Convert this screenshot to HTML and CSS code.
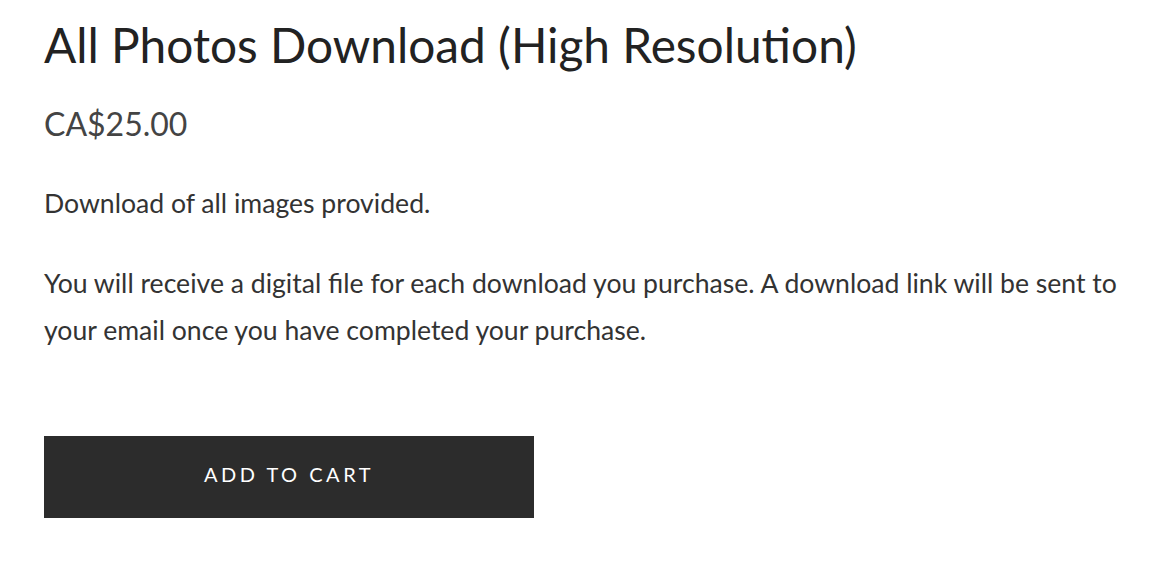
FILE: index.html
```html
<!DOCTYPE html>
<html lang="en">
<head>
    <meta charset="UTF-8">
    <meta name="viewport" content="width=device-width, initial-scale=1.0">
    <title>All Photos Download (High Resolution)</title>
    <link rel="stylesheet" href="styles.css">
</head>
<body>
    <div class="product">
        <h1 class="product-title">All Photos Download (High Resolution)</h1>
        <p class="product-price">CA$25.00</p>
        <div class="product-description">
            <p>Download of all images provided.</p>
            <p>You will receive a digital file for each download you purchase. A download link will be sent to your email once you have completed your purchase.</p>
        </div>
        <button class="add-to-cart" type="button">Add to Cart</button>
    </div>
</body>
</html>
```

FILE: styles.css
```css
body {
    font-family: Lato, "Open Sans", sans-serif;
    background: #fff;
    color: #333;
    margin: 0;
    padding: 0;
}

.product {
    padding: 16px 30px 40px 44px;
}

.product-title {
    font-size: 47.8px;
    font-weight: 400;
    line-height: 1.2;
    color: #222;
    margin: 0 0 32px;
}

.product-price {
    font-size: 32px;
    line-height: 1.2;
    color: #444;
    margin: 0 0 36px;
}

.product-description p {
    font-size: 26.6px;
    line-height: 47px;
    margin: 0 0 33px;
}

.product-description p:last-child {
    margin-bottom: 82px;
}

.add-to-cart {
    display: block;
    width: 490px;
    height: 82px;
    padding: 0 0 6px;
    background: #2c2c2c;
    color: #fff;
    border: none;
    font-family: Lato, sans-serif;
    font-size: 20px;
    letter-spacing: 3.5px;
    text-transform: uppercase;
    cursor: pointer;
}
```
